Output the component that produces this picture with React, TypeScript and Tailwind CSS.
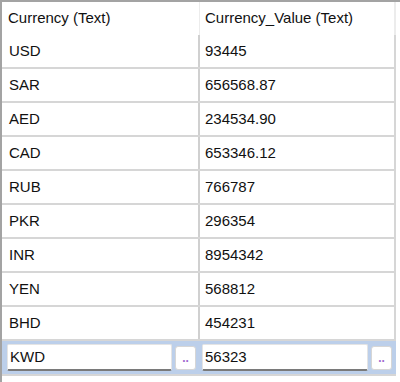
const rows: [string, string][] = [
  ["USD", "93445"],
  ["SAR", "656568.87"],
  ["AED", "234534.90"],
  ["CAD", "653346.12"],
  ["RUB", "766787"],
  ["PKR", "296354"],
  ["INR", "8954342"],
  ["YEN", "568812"],
  ["BHD", "454231"],
];

function EditCell({ value, first }: { value: string; first?: boolean }) {
  return (
    <div
      className={`flex items-center h-full ${
        first ? "w-[198px] pl-[5px] pr-[4px]" : "w-[195px] pl-[2px] pr-[3px]"
      }`}
    >
      <div className="flex-1 h-[27px] bg-white rounded-[2px] border border-[#e4e4e4] border-b-2 border-b-[#7a7a7a] flex items-center pl-[2px]">
        {value}
      </div>
      <button
        type="button"
        className="ml-[3px] w-[21px] h-[24px] bg-white rounded-[3px] border border-[#d6d6d6] text-[12px] font-bold leading-none text-[#a06ad0] flex items-end justify-center pb-[5px]"
      >
        ..
      </button>
    </div>
  );
}

export default function App() {
  return (
    <div
      className="w-[400px] h-[382px] bg-white border-t-2 border-l-2 border-[#a3a3a3] overflow-hidden text-[15px] text-[#111]"
      style={{ fontFamily: '"Liberation Sans", Arial, sans-serif' }}
    >
      <div className="w-[394px]">
        <div className="flex h-[33px]">
          <div className="w-[198px] border-r border-[#ececec] pl-[6px] pt-[5px]">Currency (Text)</div>
          <div className="w-[196px] border-r-2 border-[#ececec] pl-[5px] pt-[5px]">Currency_Value (Text)</div>
        </div>
        {rows.map(([cur, val]) => (
          <div key={cur} className="flex h-[34px] border-b-2 border-[#d6d6d6]">
            <div className="w-[198px] border-r-2 border-[#d0d0d0] pl-[7px] flex items-center">{cur}</div>
            <div className="w-[196px] border-r-2 border-[#d6d6d6] pl-[5px] flex items-center">{val}</div>
          </div>
        ))}
        <div className="flex h-[35px] bg-[#bccfea] border-b-2 border-[#d6d6d6]">
          <EditCell value="KWD" first />
          <EditCell value="56323" />
        </div>
      </div>
    </div>
  );
}
